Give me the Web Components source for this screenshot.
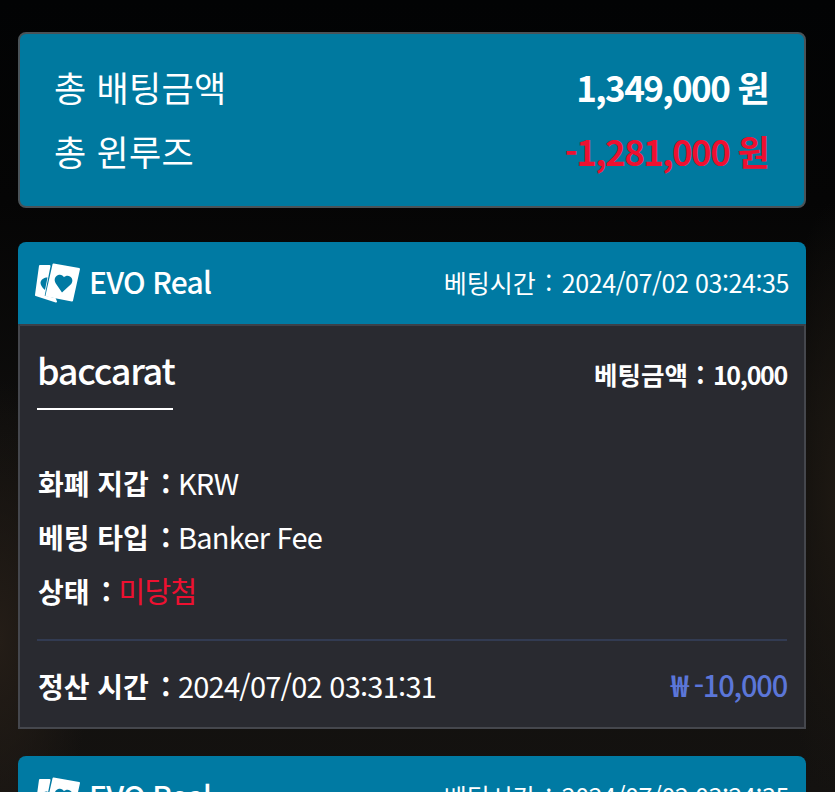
<!DOCTYPE html>
<html lang="ko">
<head>
<meta charset="utf-8">
<title>베팅 내역</title>
<style>
  html, body { margin: 0; height: 792px; overflow: hidden; }
  body {
    background:
      radial-gradient(ellipse 90px 260px at 0 640px, #241d17 0%, rgba(36,29,23,0) 100%),
      radial-gradient(ellipse 60px 300px at 835px 500px, #1d1812 0%, rgba(29,24,18,0) 100%),
      linear-gradient(#020304 0, #050505 200px, #0e0d0c 420px, #141210 792px);
    font-family: "Noto Sans CJK KR", "Noto Sans", sans-serif;
    color: #fff;
  }
  main {
    display: flex;
    flex-direction: column;
    padding: 32px 29px 0 18px;
  }
  bet-summary { margin-bottom: 34px; }
  bet-card { margin-bottom: 27px; }
</style>
</head>
<body>
<main>
  <bet-summary total="1,349,000 원" result="-1,281,000 원"></bet-summary>
  <bet-card></bet-card>
  <bet-card></bet-card>
</main>

<template id="summary-tpl">
  <style>
    :host {
      display: block;
      box-sizing: border-box;
      height: 176px;
      padding: 20px 36px 0 34px;
      background: #00799f;
      border: 2px solid #4a5358;
      border-radius: 8px;
    }
    .row {
      display: flex;
      justify-content: space-between;
      align-items: center;
      height: 64px;
      font-size: 35px;
      letter-spacing: 0.3px;
    }
    b { font-weight: 700; letter-spacing: -1.6px; }
    .loss { color: #ee1030; }
  </style>
  <div class="row"><span>총 배팅금액</span><b id="total"></b></div>
  <div class="row"><span>총 윈루즈</span><b id="result" class="loss"></b></div>
</template>

<template id="card-tpl">
  <style>
    :host { display: block; }
    header {
      display: flex;
      align-items: center;
      justify-content: space-between;
      height: 82px;
      box-sizing: border-box;
      padding: 0 17px 0 17px;
      background: #007aa3;
      border-radius: 8px 8px 0 0;
    }
    .brand { display: flex; align-items: center; gap: 8px; font-size: 30px; font-weight: 500; letter-spacing: -0.8px; }
    .brand svg { width: 46px; height: 42px; display: block; }
    .brand span { padding-bottom: 5px; }
    .when { display: flex; align-items: center; font-size: 25px; padding-bottom: 3px; }
    .when .time { letter-spacing: -0.4px; }
    .colon { width: 26px; text-align: center; }
    .body {
      box-sizing: border-box;
      height: 405px;
      padding: 0 17px;
      background: #292a30;
      border: 2px solid #45474d;
      border-top: 2px solid #3c4048;
    }
    .top { display: flex; justify-content: space-between; height: 84px; align-items: flex-start; }
    h2 {
      margin: 0;
      padding: 15px 0 0 0;
      width: 136px;
      height: 67px;
      font-size: 36px;
      font-weight: 500;
      line-height: 56px;
      letter-spacing: -1.25px;
      border-bottom: 2px solid #fff;
    }
    .stake { display: flex; align-items: center; font-size: 25.5px; font-weight: 700; margin-top: 29px; }
    .stake .colon { width: 25px; }
    .stake .num { font-size: 25px; letter-spacing: -1.3px; font-weight: 700; }
    .info { padding-top: 45px; height: 184px; }
    .foot {
      display: flex;
      justify-content: space-between;
      align-items: center;
      border-top: 2px solid #323b52;
      box-sizing: border-box;
      height: 88px;
      padding-top: 2px;
    }
    .amount { display: flex; align-items: center; gap: 5px; padding-bottom: 2px; font-size: 29px; font-weight: 500; color: #5b76d8; letter-spacing: -1.2px; }
    .amount b { font-size: 30px; font-weight: 700; letter-spacing: 0; }
    info-row { height: 54px; }
  </style>
  <header>
    <span class="brand">
      <svg viewBox="0 0 46 42" aria-hidden="true">
        <path fill="#fff" stroke="#fff" stroke-width="2" stroke-linejoin="round" d="M5 4 14.500 4 8.500 34.500 20 37 21 39.500 1 33Z"/>
        <path fill="#007aa3" d="M11 15.500C6.500 16.500 4.500 20 6 23 7 25 8.500 27 10 28L12.500 15.500Z"/>
        <path fill="#fff" stroke="#fff" stroke-width="2" stroke-linejoin="round" d="M18.500 2.500 44 7 37 38.500 11.500 33.500Z"/>
        <path fill="#007aa3" d="M27 30.500 20.800 21.500C18.500 18 20 13.500 24 12.800 26.200 12.400 28 13.400 29 15.200 30.500 13.600 33 13.200 35 14.400 37.800 16 38 19.500 36.200 22Z"/>
      </svg>
      <span>EVO Real</span>
    </span>
    <span class="when"><span>베팅시간</span><span class="colon">:</span><span class="time">2024/07/02 03:24:35</span></span>
  </header>
  <div class="body">
    <div class="top">
      <h2>baccarat</h2>
      <span class="stake"><span>베팅금액</span><span class="colon">:</span><span class="num">10,000</span></span>
    </div>
    <div class="info">
      <info-row label="화폐 지갑">KRW</info-row>
      <info-row label="베팅 타입">Banker Fee</info-row>
      <info-row label="상태" style="color:#ee1030">미당첨</info-row>
    </div>
    <div class="foot">
      <info-row label="정산 시간">2024/07/02 03:31:31</info-row>
      <span class="amount"><b>₩</b><span>-10,000</span></span>
    </div>
  </div>
</template>

<template id="row-tpl">
  <style>
    :host { display: flex; align-items: center; font-size: 29px; letter-spacing: -0.75px; }
    b { padding: 2px 0 0 1px; font-size: 28px; font-weight: 700; color: #fff; letter-spacing: 0; }
    .colon { width: 29px; padding: 2px 0 0 4px; box-sizing: border-box; text-align: center; font-size: 28px; font-weight: 700; color: #fff; }
  </style>
  <b id="label"></b><span class="colon">:</span><slot></slot>
</template>

<script>
  function fromTemplate(host, id) {
    const shadow = host.attachShadow({ mode: 'open' });
    shadow.append(document.getElementById(id).content.cloneNode(true));
    return shadow;
  }

  class BetSummary extends HTMLElement {
    connectedCallback() {
      const shadow = fromTemplate(this, 'summary-tpl');
      shadow.querySelector('#total').textContent = this.getAttribute('total');
      shadow.querySelector('#result').textContent = this.getAttribute('result');
    }
  }

  class BetCard extends HTMLElement {
    connectedCallback() {
      fromTemplate(this, 'card-tpl');
    }
  }

  class InfoRow extends HTMLElement {
    connectedCallback() {
      const shadow = fromTemplate(this, 'row-tpl');
      shadow.querySelector('#label').textContent = this.getAttribute('label');
    }
  }

  customElements.define('info-row', InfoRow);
  customElements.define('bet-summary', BetSummary);
  customElements.define('bet-card', BetCard);
</script>
</body>
</html>
